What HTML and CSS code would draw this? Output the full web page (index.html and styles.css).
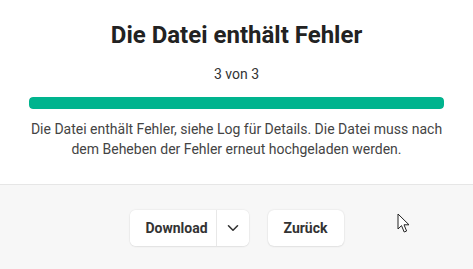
FILE: index.html
```html
<!DOCTYPE html>
<html lang="de">
<head>
<meta charset="utf-8">
<title>Die Datei enthält Fehler</title>
<link rel="stylesheet" href="styles.css">
</head>
<body>
<div class="dialog">
  <section class="content">
    <h1 class="title">Die Datei enthält Fehler</h1>
    <div class="count">3 von 3</div>
    <div class="progress"><div class="progress-fill" style="width:100%"></div></div>
    <p class="message">Die Datei enthält Fehler, siehe Log für Details. Die Datei muss nach dem Beheben der Fehler erneut hochgeladen werden.</p>
  </section>
  <footer class="footer">
    <div class="split-btn">
      <button class="btn btn-main">Download</button>
      <button class="btn btn-toggle" aria-label="Mehr">
        <svg width="12" height="8" viewBox="0 0 12 8"><path d="M1.5 1.8 L6 6.2 L10.5 1.8" fill="none" stroke="#333" stroke-width="1.6" stroke-linecap="round" stroke-linejoin="round"/></svg>
      </button>
    </div>
    <button class="btn btn-single">Zurück</button>
  </footer>
  <svg class="cursor" width="14" height="21" viewBox="0 0 14 21"><path d="M1 1 L1 16 L4.5 12.6 L7.2 19 L9.6 18 L7 11.8 L12 11.8 Z" fill="#fff" stroke="#222" stroke-width="1" stroke-linejoin="round"/></svg>
</div>
</body>
</html>
```
FILE: styles.css
```css
* { box-sizing: border-box; }
html, body { margin: 0; padding: 0; }
body {
  background: #fff;
  font-family: Roboto, "Noto Sans", Arial, sans-serif;
  color: #333;
  width: 473px;
  height: 269px;
  overflow: hidden;
}
.dialog {
  position: relative;
  display: flex;
  flex-direction: column;
  height: 269px;
}
.content {
  padding: 21px 29px 25px;
  display: flex;
  flex-direction: column;
  align-items: stretch;
  text-align: center;
}
.title {
  margin: 0;
  font-size: 24px;
  line-height: 28px;
  font-weight: 700;
  color: #222;
}
.count {
  margin-top: 15px;
  font-size: 14px;
  line-height: 20px;
  color: #333;
}
.progress {
  margin-top: 13px;
  height: 12px;
  border-radius: 4px;
  background: #e6e6e6;
  overflow: hidden;
}
.progress-fill {
  height: 100%;
  background: #00b48e;
  border-radius: 4px;
}
.message {
  margin: 11px -4px 0;
  font-size: 14px;
  line-height: 19.5px;
  color: #444;
}
.footer {
  flex: 1;
  background: #f7f7f7;
  border-top: 1px solid #e6e6e6;
  display: flex;
  justify-content: center;
  align-items: flex-start;
  gap: 19px;
  padding-top: 25px;
}
.btn {
  font-family: Roboto, "Noto Sans", Arial, sans-serif;
  font-size: 14px;
  font-weight: 700;
  color: #333;
  background: #fff;
  border: none;
  height: 36px;
  padding: 0;
  cursor: pointer;
}
.split-btn {
  display: flex;
  background: #fff;
  border-radius: 6px;
  box-shadow: 0 0 2px rgba(0,0,0,0.12), 0 1px 2px rgba(0,0,0,0.06);
  overflow: hidden;
}
.btn-main {
  width: 87px;
  border-right: 1px solid #e8e8e8;
  padding-left: 8px;
}
.btn-toggle {
  width: 32px;
  display: flex;
  align-items: center;
  justify-content: center;
}
.btn-single {
  width: 76px;
  border-radius: 6px;
  box-shadow: 0 0 2px rgba(0,0,0,0.12), 0 1px 2px rgba(0,0,0,0.06);
}
.cursor {
  position: absolute;
  left: 397px;
  top: 213px;
}
```
